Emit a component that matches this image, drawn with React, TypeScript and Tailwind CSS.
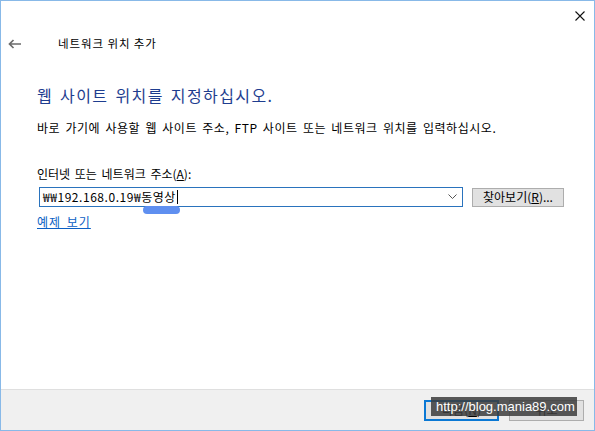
import React from "react";

const KR = { fontFamily: '"Noto Sans CJK KR", "Noto Sans", sans-serif' };

export default function App() {
  return (
    <div
      className="relative w-[595px] h-[431px] border border-[#88b9e8] bg-white flex flex-col text-[#000] overflow-hidden"
      style={KR}
    >
      {/* close row */}
      <div className="h-[29px] flex justify-end items-center pr-[9px]">
        <svg width="10" height="10" viewBox="0 0 10 10" className="mt-[1px]">
          <path d="M0.5 0.5 L9.5 9.5 M9.5 0.5 L0.5 9.5" stroke="#111" strokeWidth="1.1" />
        </svg>
      </div>

      {/* back row */}
      <div className="h-[28px] flex items-center">
        <div className="w-[57px] pl-[7px] flex items-center">
          <svg width="14" height="10" viewBox="0 0 14 10">
            <path d="M13 5 H1.5 M5.5 1 L1.5 5 L5.5 9" stroke="#6b6b6b" strokeWidth="1.7" fill="none" />
          </svg>
        </div>
        <span className="text-[11.5px] leading-none tracking-[0.9px]">네트워크 위치 추가</span>
      </div>

      {/* content */}
      <div className="pl-[36px] pr-[20px] flex flex-col">
        <div className="mt-[25px] h-[24px] flex items-center text-[16px] text-[#1e3d8f] tracking-[1.4px] [word-spacing:2px] whitespace-nowrap">
          웹 사이트 위치를 지정하십시오.
        </div>
        <div className="mt-[12px] h-[18px] flex items-center text-[12px] tracking-[0.55px] [word-spacing:2px] whitespace-nowrap">
          바로 가기에 사용할 웹 사이트 주소, FTP 사이트 또는 네트워크 위치를 입력하십시오.
        </div>
        <div className="mt-[28px] h-[18px] flex items-center text-[12px] [word-spacing:2px] whitespace-nowrap">
          인터넷 또는 네트워크 주소(<span className="underline">A</span>):
        </div>
        <div className="mt-[4px] flex items-center">
          <div className="relative ml-[2px] w-[424px] h-[20px] border border-[#2a73bd] flex items-center pl-[3px]">
            <span className="text-[12px] leading-none tracking-[0.55px]">₩₩192.168.0.19₩동영상</span>
            <span className="w-[1px] h-[14px] bg-black ml-[1px]" />
            <div className="flex-1" />
            <svg width="9" height="6" viewBox="0 0 9 6" className="mr-[5px]">
              <path d="M0.5 0.5 L4.5 4.5 L8.5 0.5" stroke="#555" strokeWidth="1" fill="none" />
            </svg>
            <div className="absolute left-[103px] top-[18px] w-[37px] h-[8px] rounded-full bg-[#5f8ff0]" />
          </div>
          <div className="ml-[9px] w-[92px] h-[19px] bg-[#e1e1e1] border border-[#adadad] flex items-center justify-center text-[12px] leading-none">
            찾아보기(<span className="underline">R</span>)...
          </div>
        </div>
        <div className="mt-[7px] h-[16px] flex items-center text-[12px] text-[#0b5fc4] underline tracking-[1px] [word-spacing:2px]">
          예제 보기
        </div>
      </div>

      <div className="flex-1" />

      {/* footer */}
      <div className="h-[41px] border-t border-[#dfdfdf] bg-[#f0f0f0] flex items-center justify-end gap-[10px] pr-[10px]">
        <div className="w-[75px] h-[21px] border-2 border-[#0a78d4] bg-[#e1e1e1] flex items-center justify-center text-[12px] leading-none">
          다음(<span className="underline">N</span>)
        </div>
        <div className="w-[75px] h-[21px] border border-[#adadad] bg-[#e1e1e1] flex items-center justify-center text-[12px] leading-none">
          취소
        </div>
      </div>

      {/* watermark */}
      <div
        className="absolute left-[430px] top-[396px] w-[146px] h-[19px] bg-[#3c3c3c]/85 flex items-center pl-[5px] text-white text-[13px] leading-none"
        style={{ fontFamily: '"Liberation Sans", Arial, sans-serif' }}
      >
        http://blog.mania89.com
      </div>
    </div>
  );
}
